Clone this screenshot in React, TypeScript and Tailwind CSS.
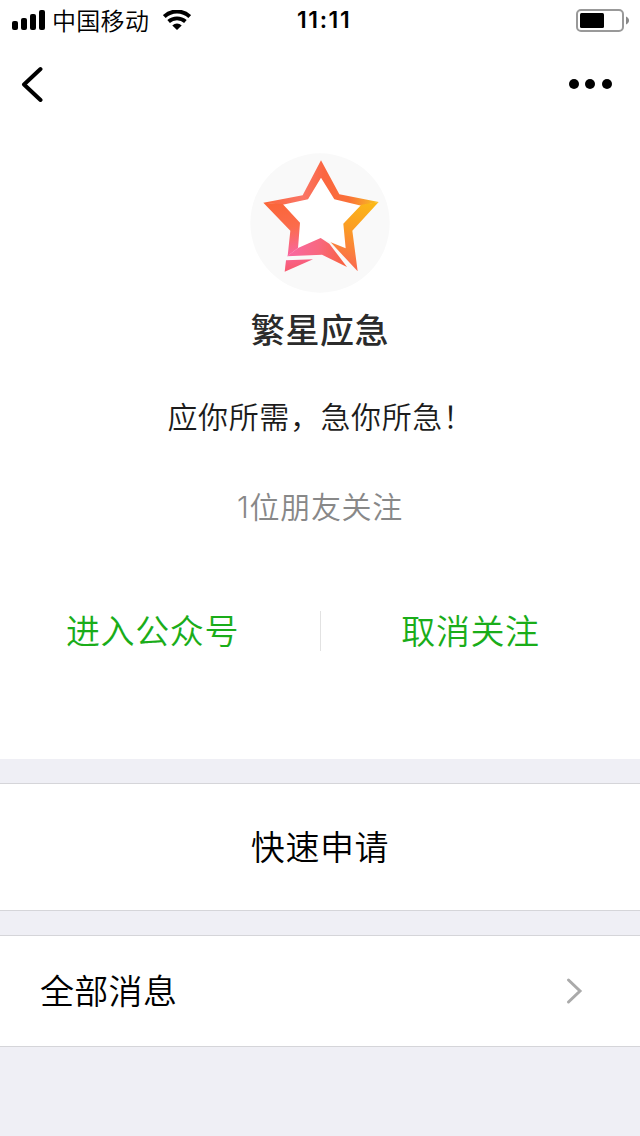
import React from "react";

function StatusBar() {
  return (
    <header className="flex h-10 items-center">
      <div className="flex flex-1 items-center pl-3">
        <svg className="h-5 w-[34px]" viewBox="0 0 34 20">
          <rect x="0" y="11" width="6" height="9" rx="2" />
          <rect x="9" y="8" width="6" height="12" rx="2" />
          <rect x="18" y="4" width="6" height="16" rx="2" />
          <rect x="27" y="0" width="6" height="20" rx="2" />
        </svg>
        <span className="ml-[6px] h-10 text-2xl leading-[40px] font-[350] tracking-[0.3px]">中国移动</span>
        <svg className="ml-[14px] h-5 w-7" viewBox="0 0 28 20" fill="none" stroke="#000">
          <path d="M1.3 6.600C8.400-.2 19.600-.2 26.700 6.600" strokeWidth="4" />
          <path d="M5.600 11.500c4.700-4.300 12.100-4.300 16.800 0" strokeWidth="3.800" />
          <path d="M9.300 15.400c2.700-2.700 6.700-2.700 9.400 0L14 20z" fill="#000" stroke="none" />
        </svg>
      </div>
      <time className="w-[60px] pl-[6px] font-['Inter','Liberation_Sans',sans-serif] text-[23px] leading-[41px] font-semibold tracking-[1.6px] whitespace-nowrap">
        11:11
      </time>
      <div className="flex flex-1 justify-end pr-[10px]">
        <svg className="h-6 w-[54px]" viewBox="0 0 54 24">
          <rect x="1" y="2" width="46" height="21" rx="4" fill="none" stroke="#999" strokeWidth="2" />
          <rect x="4" y="5" width="24" height="15" rx="1.5" />
          <path d="M50 8.500c4 1.500 4 6.500 0 8z" fill="#888" />
        </svg>
      </div>
    </header>
  );
}

function NavBar() {
  return (
    <nav className="flex h-[88px] items-center justify-between pr-[27px] pl-5">
      <svg className="h-9 w-6" viewBox="0 0 24 36" fill="none" stroke="#000" strokeWidth="4" strokeLinecap="round" strokeLinejoin="round">
        <path d="M20.500 3L4 18.500 20.500 34" />
      </svg>
      <svg className="h-3 w-11" viewBox="0 0 44 12">
        <circle cx="5" cy="6" r="5" />
        <circle cx="21" cy="6" r="5" />
        <circle cx="38" cy="6" r="5" />
      </svg>
    </nav>
  );
}

function Avatar() {
  return (
    <svg className="h-[140px] w-[140px]" viewBox="30 24 420 420">
      <defs>
        <linearGradient id="left" gradientUnits="userSpaceOnUse" x1="120" y1="170" x2="155" y2="370">
          <stop offset="0" stopColor="#fb6538" />
          <stop offset=".4" stopColor="#fb6c4c" />
          <stop offset=".78" stopColor="#f9669a" />
          <stop offset="1" stopColor="#f85c72" />
        </linearGradient>
        <linearGradient id="right" gradientUnits="userSpaceOnUse" x1="400" y1="170" x2="325" y2="375">
          <stop offset="0" stopColor="#fbb916" />
          <stop offset=".45" stopColor="#fb9d24" />
          <stop offset="1" stopColor="#fa6652" />
        </linearGradient>
        <linearGradient id="top" gradientUnits="userSpaceOnUse" x1="70" y1="160" x2="410" y2="180">
          <stop offset="0" stopColor="#fb6538" />
          <stop offset=".35" stopColor="#fa7566" />
          <stop offset=".52" stopColor="#fb6640" />
          <stop offset=".75" stopColor="#fa7038" />
          <stop offset="1" stopColor="#f8c020" />
        </linearGradient>
        <linearGradient id="base" gradientUnits="userSpaceOnUse" x1="150" y1="330" x2="315" y2="350">
          <stop offset="0" stopColor="#f968a0" />
          <stop offset=".5" stopColor="#f86880" />
          <stop offset="1" stopColor="#f9623f" />
        </linearGradient>
      </defs>
      <circle cx="240" cy="234" r="209" fill="#f9f9f9" />
      <path d="M243 96L283 160 364 179 310 236 317 310 272 290 242 280 174 309 180 233 128 177 204 161Z" fill="#fff" />
      <path d="M70 173L188 151 243 46 298 148 416 171 364 182 283 163 243 98 204 163 128 179Z" fill="url(#top)" />
      <path d="M70 173L128 177 180 233 174 309 143 333 151 257Z" fill="url(#left)" />
      <path d="M416 171L337 257 353 379 272 292 317 310 310 236 364 179Z" fill="url(#right)" />
      <path d="M141 334L174 309 242 279 268 296 321 366 246 329Z" fill="url(#base)" />
      <path d="M138 346L219 343 134 380Z" fill="url(#left)" />
    </svg>
  );
}

export default function App() {
  return (
    <div className="flex h-[1136px] w-[640px] flex-col bg-[#efeff5] font-['Noto_Sans_CJK_SC',sans-serif] text-black">
      <div className="h-[759px] bg-white">
        <StatusBar />
        <NavBar />
        <main className="flex flex-col items-center pt-[25px]">
          <Avatar />
          <h1 className="mt-[11px] text-[34px] leading-[50px] font-medium tracking-[0.6px] text-[#2b2b2b]">繁星应急</h1>
          <p className="mt-[39px] pl-px text-[30px] leading-[44px] font-[350] tracking-[0.6px] text-[#1c1c1c]">应你所需，急你所急！</p>
          <p className="mt-[46px] text-[30px] leading-[44px] font-[350] tracking-[0.7px] text-[#888]">
            <span className="font-['Inter',sans-serif]">1</span>位朋友关注
          </p>
          <div className="mt-[82px] flex h-10 w-full items-center text-[34px] leading-[40px] font-[350] tracking-[0.6px] text-[#1aad19]">
            <button className="w-80 pr-[15px] pb-[3px]">进入公众号</button>
            <span className="h-10 w-px bg-[#e2e2e2]" />
            <button className="flex-1 pr-5 pb-[3px]">取消关注</button>
          </div>
        </main>
      </div>
      <button className="mt-6 h-32 border-y border-[#d5d5d9] bg-white pb-[3px] text-[34px] font-[350] tracking-[0.6px]">快速申请</button>
      <button className="mt-6 flex h-28 items-center justify-between border-y border-[#d5d5d9] bg-white pr-14 pl-10 text-[34px] font-[350] tracking-[0.3px]">
        <span className="pb-[3px]">全部消息</span>
        <svg className="h-7 w-5" viewBox="0 0 20 28" fill="none" stroke="#aaa" strokeWidth="3" strokeLinecap="round">
          <path d="M4.500 3L16 14 4.500 25" />
        </svg>
      </button>
    </div>
  );
}
